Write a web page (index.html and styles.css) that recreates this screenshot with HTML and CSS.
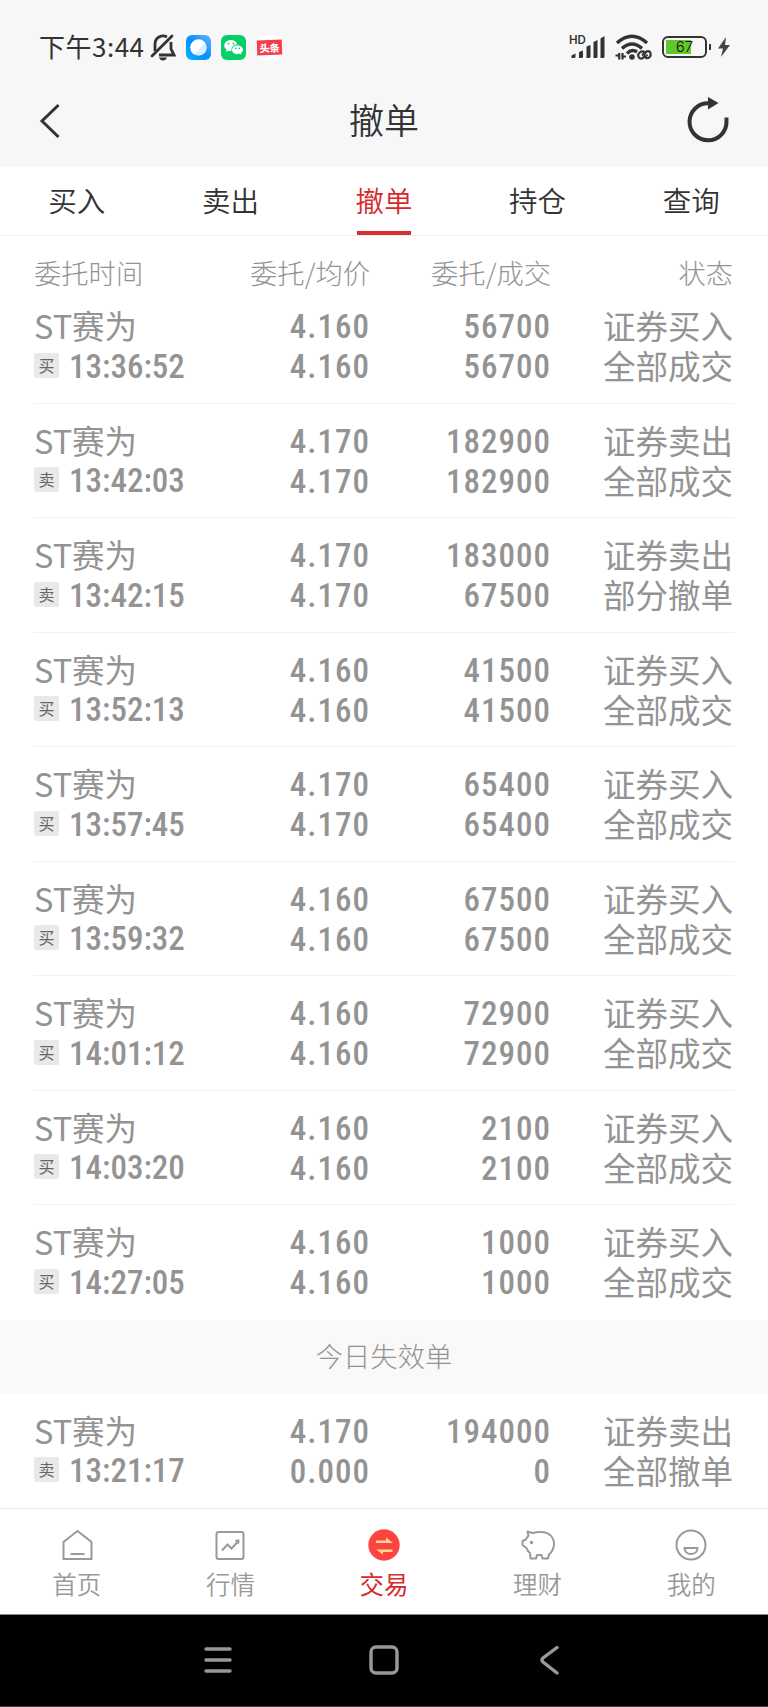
FILE: index.html
```html
<!DOCTYPE html>
<html lang="zh-CN">

<head>
    <meta charset="UTF-8">
    <meta name="viewport" content="width=device-width, initial-scale=1.0">
    <title>撤单</title>
    <link rel="stylesheet" href="styles.css">
</head>

<body>
    <div class="status-bar">
        <span class="clock">下午3:44</span>
        <svg class="mute" width="26" height="28" viewBox="0 0 26 28" fill="none" stroke="#333" stroke-width="2.8">
            <path d="M5 18V11A8 8 0 0 1 17 4M21 9V16L24 22H9" />
            <path d="M2 23L22 3" stroke-linecap="round" />
            <path d="M9 24.500H17Q16 27.500 13 27.500T9 24.500Z" fill="#333" stroke="none" />
        </svg>
        <svg class="app" width="25" height="25" viewBox="0 0 25 25">
            <defs>
                <linearGradient id="blue" x1="0" y1="1" x2="1" y2="0">
                    <stop offset="0" stop-color="#0ab4ff" />
                    <stop offset=".5" stop-color="#078dff" />
                    <stop offset="1" stop-color="#65b7ff" />
                </linearGradient>
                <linearGradient id="pearl" x1="0" y1="0" x2="1" y2="1">
                    <stop offset=".55" stop-color="#fff" />
                    <stop offset=".6" stop-color="#dcecfc" />
                </linearGradient>
            </defs>
            <rect width="25" height="25" rx="6" fill="url(#blue)" />
            <circle cx="12.5" cy="12.5" r="8.3" fill="url(#pearl)" />
        </svg>
        <svg class="app" width="25" height="25" viewBox="0 0 25 25">
            <rect width="25" height="25" rx="6" fill="#06cf6a" />
            <path d="M10 5C6 5 3.3 7.5 3.3 10.5C3.3 12.3 4.2 13.7 5.6 14.7L5.2 17L7.6 15.7Q9 16.1 10.5 15.9C10 11.8 13.5 9.3 16.4 9.6C15.8 7 13.2 5 10 5Z" fill="#fff" />
            <path d="M16.5 10.4C13.3 10.4 11 12.4 11 14.8C11 17.3 13.4 19.2 16.3 19.2Q17.4 19.2 18.5 18.8L20.4 19.8L20 18C21.3 17.2 22 16 22 14.8C22 12.4 19.5 10.4 16.5 10.4Z" fill="#fff" />
            <g fill="#06cf6a">
                <circle cx="7.7" cy="8.7" r=".9" />
                <circle cx="12.3" cy="8.7" r=".9" />
                <circle cx="14.7" cy="13.4" r=".8" />
                <circle cx="18.3" cy="13.4" r=".8" />
            </g>
        </svg>
        <span class="toutiao"><b>头条</b></span>

        <div class="signal">
            <span class="hd">HD</span>
            <svg width="35" height="24" viewBox="0 0 35 24" fill="#333">
                <path d="M1.500 23V20.500L5.500 18.500V21.500Q5.500 23 4 23Z" />
                <path d="M9 17L13 15.500V21.500Q13 23 11.500 23H9Z" />
                <path d="M16.500 11.500L20.500 10V21.500Q20.500 23 19 23H16.500Z" />
                <path d="M23.500 7L27.500 5V21.500Q27.500 23 26 23H23.500Z" />
                <path d="M30.500 3.500L34.500 1V21.500Q34.500 23 33 23H30.500Z" />
            </svg>
        </div>
        <svg class="wifi" width="38" height="28" viewBox="0 0 38 28" fill="none" stroke="#333">
            <path d="M2 10Q17-3.500 32 10" stroke-width="3.400" />
            <path d="M7 15.500Q17 6.500 27 15.500" stroke-width="3.400" />
            <path d="M12 20.500Q17 15.500 22 19" stroke-width="3.400" />
            <circle cx="17" cy="24" r="2.800" fill="#333" stroke="none" />
            <path d="M4.200 20V26.500M.5 22.500H4M7.500 26.500V20M11 23.500H7.500" stroke-width="2.200" />
            <path d="M29.500 18.800C26 17.500 22.500 20.500 23.300 23.200C24.500 27 29.500 25.700 29.500 22C29.500 18 34 17 35.500 20C36.500 23.500 33.500 26 30.500 25" stroke-width="2.200" />
            <path d="M29.500 19L27 22.500M32.500 21.500L30 25" stroke-width="1.800" />
        </svg>
        <div class="battery"><span>67</span></div>
        <svg class="bolt" width="14" height="22" viewBox="0 0 14 22">
            <path d="M9 1L1 12.500H6L4 21L13 9H8Z" fill="#444" />
        </svg>
    </div>

    <header class="title-bar">
        <svg width="42" height="36" viewBox="0 0 42 36" fill="none" stroke="#333" stroke-width="3">
            <path d="M19.500 2L3 18L19.500 34" />
        </svg>
        <h1>撤单</h1>
        <svg width="42" height="48" viewBox="0 0 42 48">
            <path d="M39.500 20.500V24A18.500 18.500 0 1 1 22 6.300" fill="none" stroke="#333" stroke-width="4" />
            <path d="M21 0L31.500 6L21 12.500Z" fill="#333" />
        </svg>
    </header>

    <nav class="tabs">
        <a>买入</a>
        <a>卖出</a>
        <a class="active">撤单</a>
        <a>持仓</a>
        <a>查询</a>
    </nav>

    <div class="columns head">
        <span>委托时间</span>
        <span>委托/均价</span>
        <span>委托/成交</span>
        <span>状态</span>
    </div>

    <div class="orders">
        <div class="columns order">
            <div>ST赛为<p><i>买</i><time>13:36:52</time></p></div>
            <div class="num">4.160<p>4.160</p></div>
            <div class="num">56700<p>56700</p></div>
            <div>证券买入<p>全部成交</p></div>
        </div>
        <div class="columns order">
            <div>ST赛为<p><i>卖</i><time>13:42:03</time></p></div>
            <div class="num">4.170<p>4.170</p></div>
            <div class="num">182900<p>182900</p></div>
            <div>证券卖出<p>全部成交</p></div>
        </div>
        <div class="columns order">
            <div>ST赛为<p><i>卖</i><time>13:42:15</time></p></div>
            <div class="num">4.170<p>4.170</p></div>
            <div class="num">183000<p>67500</p></div>
            <div>证券卖出<p>部分撤单</p></div>
        </div>
        <div class="columns order">
            <div>ST赛为<p><i>买</i><time>13:52:13</time></p></div>
            <div class="num">4.160<p>4.160</p></div>
            <div class="num">41500<p>41500</p></div>
            <div>证券买入<p>全部成交</p></div>
        </div>
        <div class="columns order">
            <div>ST赛为<p><i>买</i><time>13:57:45</time></p></div>
            <div class="num">4.170<p>4.170</p></div>
            <div class="num">65400<p>65400</p></div>
            <div>证券买入<p>全部成交</p></div>
        </div>
        <div class="columns order">
            <div>ST赛为<p><i>买</i><time>13:59:32</time></p></div>
            <div class="num">4.160<p>4.160</p></div>
            <div class="num">67500<p>67500</p></div>
            <div>证券买入<p>全部成交</p></div>
        </div>
        <div class="columns order">
            <div>ST赛为<p><i>买</i><time>14:01:12</time></p></div>
            <div class="num">4.160<p>4.160</p></div>
            <div class="num">72900<p>72900</p></div>
            <div>证券买入<p>全部成交</p></div>
        </div>
        <div class="columns order">
            <div>ST赛为<p><i>买</i><time>14:03:20</time></p></div>
            <div class="num">4.160<p>4.160</p></div>
            <div class="num">2100<p>2100</p></div>
            <div>证券买入<p>全部成交</p></div>
        </div>
        <div class="columns order">
            <div>ST赛为<p><i>买</i><time>14:27:05</time></p></div>
            <div class="num">4.160<p>4.160</p></div>
            <div class="num">1000<p>1000</p></div>
            <div>证券买入<p>全部成交</p></div>
        </div>
    </div>

    <h2 class="section">今日失效单</h2>

    <div class="orders">
        <div class="columns order">
            <div>ST赛为<p><i>卖</i><time>13:21:17</time></p></div>
            <div class="num">4.170<p>0.000</p></div>
            <div class="num">194000<p>0</p></div>
            <div>证券卖出<p>全部撤单</p></div>
        </div>
    </div>

    <nav class="bottom-nav">
        <a>
            <svg width="34" height="34" viewBox="0 0 34 34" fill="none" stroke="#999" stroke-width="2">
                <path d="M3.500 31V14L17.500 3L31.500 14V31ZM10.500 26H24.500" />
            </svg>
            首页
        </a>
        <a>
            <svg width="34" height="34" viewBox="0 0 34 34" fill="none" stroke="#999" stroke-width="2">
                <rect x="3.500" y="4" width="27" height="27" rx="2" />
                <path d="M9 22.500L14.500 16.500L18.500 20.500L25 13.500" />
                <path d="M21.500 12L26.500 11.500L26 16.500Z" fill="#999" stroke="none" />
            </svg>
            行情
        </a>
        <a class="active">
            <svg width="34" height="34" viewBox="0 0 34 34">
                <circle cx="17" cy="17" r="15.700" fill="#fb4442" />
                <path d="M9 12.500H19V9.500L26 15H9ZM25.500 21.500V24H16V26.500L9 21.500Z" fill="#ffd592" />
            </svg>
            交易
        </a>
        <a>
            <svg width="36" height="34" viewBox="0 0 36 34" fill="none" stroke="#999" stroke-width="2" stroke-linejoin="round">
                <path d="M7.500 3.500L12.500 5Q16 4 21 4C29 4 34 9 34 16Q34 22 29 26.500L28 30.500H22.500L21.500 27H17L16 30.500H10.500L10 25Q7.500 23.500 6.500 20L2.500 17V13L6 11.500Q6.500 9.500 8.500 8Z" />
                <circle cx="11.500" cy="14.500" r="1.700" fill="#999" stroke="none" />
            </svg>
            理财
        </a>
        <a>
            <svg width="34" height="34" viewBox="0 0 34 34" fill="none" stroke="#999" stroke-width="2">
                <circle cx="17" cy="17" r="14.500" />
                <path d="M10.500 20H23.500C23.500 28 10.500 28 10.500 20Z" />
            </svg>
            我的
        </a>
    </nav>

    <div class="system-nav">
        <svg width="30" height="30" viewBox="0 0 30 30" stroke="#999" stroke-width="3.400" stroke-linecap="round">
            <path d="M3 4H27M3 15H27M3 26H27" />
        </svg>
        <svg width="30" height="30" viewBox="0 0 30 30" fill="none" stroke="#999" stroke-width="3.400">
            <rect x="2" y="2" width="26" height="26" rx="5" />
        </svg>
        <svg width="30" height="30" viewBox="0 0 30 30" fill="none" stroke="#999" stroke-width="3.400" stroke-linecap="round">
            <path d="M22 2.500L8 13Q6 15 8 17L22 28" />
        </svg>
    </div>
</body>

</html>
```
FILE: styles.css
```css
* {
    box-sizing: border-box;
}

body {
    margin: 0;
    width: 768px;
    height: 1707px;
    overflow: hidden;
    display: flex;
    flex-direction: column;
    background: #fff;
    color: #333;
    font-family: "Noto Sans CJK SC", sans-serif;
    font-weight: 300;
}

svg {
    flex: none;
    display: block;
}

h1,
h2,
p {
    margin: 0;
    font-weight: inherit;
}

.status-bar {
    height: 94px;
    flex: none;
    padding: 0 37px 0 39px;
    display: flex;
    align-items: center;
    background: #f7f7f7;
}

.clock {
    width: 111px;
    padding-bottom: 4px;
    font-size: 26px;
    font-weight: 400;
    letter-spacing: 0.5px;
    white-space: nowrap;
}

.app {
    margin-left: 10px;
}

.toutiao {
    width: 25px;
    height: 25px;
    margin-left: 11px;
    display: flex;
    align-items: center;
    border-radius: 8px;
    background: #fff;
}

.toutiao b {
    width: 25px;
    height: 15px;
    background: #f1404b;
    color: #fff;
    font-size: 10px;
    font-weight: 900;
    line-height: 15px;
    text-align: center;
    transform: rotate(-2deg);
}

.signal {
    position: relative;
    margin-left: auto;
}

.hd {
    position: absolute;
    left: -1px;
    top: -1px;
    font: 600 11.5px/12px Inter, sans-serif;
}

.wifi {
    margin-left: 10px;
}

.battery {
    position: relative;
    width: 45px;
    height: 22px;
    margin-left: 9px;
    border: 2px solid #333;
    border-radius: 6px;
    background: linear-gradient(#62c829, #62c829) 2px 2px / 25px 14px no-repeat;
    font: 300 15px/18px Inter, sans-serif;
    text-align: center;
    color: #111;
}

.battery::after {
    content: "";
    position: absolute;
    right: -6px;
    top: 6px;
    width: 2px;
    height: 6px;
    background: #333;
}

.bolt {
    margin-left: 10px;
}

.title-bar {
    height: 73px;
    flex: none;
    padding: 0 39px 19px 39px;
    display: flex;
    align-items: center;
    justify-content: space-between;
    background: #f7f7f7;
}

.title-bar h1 {
    padding-bottom: 4px;
    font-size: 35px;
    font-weight: 350;
    line-height: 46px;
}

.tabs {
    height: 69px;
    flex: none;
    display: flex;
    border-bottom: 1px solid #f0f0f0;
}

.tabs a {
    position: relative;
    flex: 1;
    font-size: 28.5px;
    font-weight: 350;
    line-height: 66px;
    text-align: center;
}

.tabs .active {
    color: #d8292c;
}

.tabs .active::after {
    content: "";
    position: absolute;
    left: 50px;
    bottom: 0;
    width: 54px;
    height: 4px;
    background: #d62f30;
}

.columns {
    display: grid;
    grid-template-columns: 160px 176px 181px 182px;
    text-align: right;
    color: #939393;
}

.columns > :first-child {
    text-align: left;
}

.head {
    height: 53px;
    flex: none;
    padding: 0 34px;
    font-size: 27.3px;
    line-height: 72px;
}

.orders {
    flex: none;
    padding: 0 34px;
}

.order {
    height: 114.5px;
    padding-top: 16px;
    border-bottom: 1px solid #f2f2f2;
    font-size: 32.5px;
    font-weight: 400;
    line-height: 40px;
    white-space: nowrap;
}

.order:last-child {
    border-bottom: none;
}

.num,
.order time {
    font-family: Roboto, sans-serif;
    font-size: 33px;
    font-weight: 500;
    font-stretch: 75%;
}

.num {
    padding-top: 2px;
    letter-spacing: 1px;
}

.order time {
    padding-top: 3px;
}

.order p {
    height: 40px;
    display: flex;
    align-items: center;
    justify-content: flex-end;
}

.order > :first-child p {
    justify-content: flex-start;
}

.order i {
    width: 25px;
    height: 25px;
    margin-right: 10px;
    border-radius: 2px;
    background: #e9e9e9;
    color: #666;
    font-size: 16px;
    font-style: normal;
    line-height: 24px;
    text-align: center;
}

.section {
    height: 74px;
    flex: none;
    background: #f9f9f9;
    color: #939393;
    font-size: 27.3px;
    line-height: 70px;
    text-align: center;
}

.bottom-nav {
    height: 106px;
    flex: none;
    padding-top: 19px;
    display: flex;
    border-top: 1px solid #ececec;
}

.bottom-nav a {
    flex: 1;
    display: flex;
    flex-direction: column;
    align-items: center;
    color: #999;
    font-size: 24.5px;
    font-weight: 350;
    line-height: 44px;
}

.bottom-nav .active {
    color: #d8292c;
    font-weight: 400;
}

.system-nav {
    flex: 1;
    padding-bottom: 2px;
    display: flex;
    justify-content: center;
    align-items: center;
    gap: 136px;
    background: #000;
    border-top: 1px solid #888;
    border-bottom: 1px solid #444;
}
```
